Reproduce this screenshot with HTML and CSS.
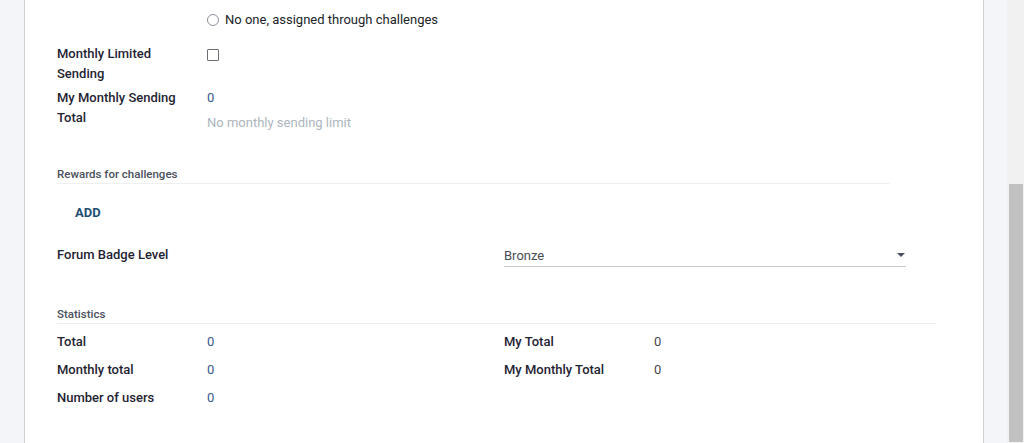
FILE: index.html
```html
<!DOCTYPE html>
<html>
<head>
  <title>Badge - Forum</title>
  <link rel="stylesheet" href="styles.css">
</head>
<body>
  <div class="page">
    <div class="gutter"></div>
    <main class="sheet">
      <!-- Granting options -->
      <div class="field-row first">
        <div class="label"></div>
        <div class="value">
          <label class="radio"><span class="radio-dot"></span>No one, assigned through challenges</label>
        </div>
      </div>
      <div class="field-row gap-top">
        <div class="label">Monthly Limited Sending</div>
        <div class="value"><span class="checkbox"></span></div>
      </div>
      <div class="field-row gap-small">
        <div class="label">My Monthly Sending Total</div>
        <div class="value">
          <div class="number">0</div>
          <div class="hint">No monthly sending limit</div>
        </div>
      </div>

      <!-- Rewards -->
      <div class="separator rewards">Rewards for challenges</div>
      <div class="add-line">ADD</div>
      <div class="field-row badge-row">
        <div class="label wide">Forum Badge Level</div>
        <div class="select">
          <span>Bronze</span>
          <span class="caret"></span>
        </div>
      </div>

      <!-- Statistics -->
      <div class="separator stats">Statistics</div>
      <div class="stats-grid">
        <div class="stats-col">
          <div class="field-row stat"><div class="label">Total</div><div class="number">0</div></div>
          <div class="field-row stat"><div class="label">Monthly total</div><div class="number">0</div></div>
          <div class="field-row stat"><div class="label">Number of users</div><div class="number">0</div></div>
        </div>
        <div class="stats-col mine">
          <div class="field-row stat"><div class="label">My Total</div><div class="number">0</div></div>
          <div class="field-row stat"><div class="label">My Monthly Total</div><div class="number">0</div></div>
        </div>
      </div>
    </main>
    <div class="gutter right"></div>
    <div class="scrollbar"><div class="thumb"></div></div>
  </div>
</body>
</html>
```

FILE: styles.css
```css
html, body {
  margin: 0;
  height: 100%;
  overflow: hidden;
}

body {
  font-family: Roboto, "Liberation Sans", sans-serif;
  font-size: 13px;
  line-height: 20px;
  color: #1f2433;
  background: #f4f5f8;
}

.page {
  display: flex;
  height: 443px;
}

.gutter {
  width: 24px;
  background: #f4f5f8;
}

.gutter.right {
  width: 23px;
}

.sheet {
  width: 879px;
  background: #fff;
  border-left: 1px solid #cfd0d4;
  border-right: 1px solid #cfd0d4;
  padding: 0 47px 0 32px;
}

.scrollbar {
  width: 17px;
  background: #f1f1f1;
  display: flex;
  justify-content: center;
}

.thumb {
  width: 14px;
  margin-top: 184px;
  height: 258px;
  background: #c1c1c1;
}

/* rows */
.field-row {
  display: flex;
}

.field-row.first {
  padding-top: 10px;
}

.gap-top {
  margin-top: 14px;
}

.gap-small {
  margin-top: 4px;
}

.label {
  width: 150px;
  padding-right: 16px;
  box-sizing: border-box;
  font-weight: 500;
  flex-shrink: 0;
}

.label.wide {
  width: 447px;
}

.value {
  display: flex;
  flex-direction: column;
}

.number {
  color: #34598c;
}

.mine .number {
  color: #45474d;
}

.hint {
  margin-top: 5px;
  color: #adb5bd;
}

.radio {
  display: flex;
  align-items: center;
  color: #212529;
}

.radio-dot {
  width: 10px;
  height: 10px;
  border: 1px solid #8a8f98;
  border-radius: 50%;
  margin-right: 6px;
}

.checkbox {
  display: block;
  width: 10px;
  height: 10px;
  border: 1px solid #6c6f76;
  border-radius: 1px;
  margin-top: 5px;
}

/* separators */
.separator {
  font-size: 11.5px;
  line-height: 17px;
  font-weight: 500;
  color: #4a505c;
  border-bottom: 1px solid #eeeff1;
}

.separator.rewards {
  margin-top: 33px;
  width: 833px;
}

.separator.stats {
  margin-top: 39px;
}

.add-line {
  margin-top: 19px;
  padding-left: 18px;
  font-weight: 700;
  color: #1e4f72;
}

.badge-row {
  margin-top: 22px;
}

.select {
  width: 402px;
  display: flex;
  justify-content: space-between;
  align-items: center;
  padding-top: 1px;
  border-bottom: 1px solid #c9cbd0;
  color: #4a4d55;
}

.caret {
  width: 0;
  height: 0;
  border-left: 4px solid transparent;
  border-right: 4px solid transparent;
  border-top: 4px solid #4a4d5e;
  margin-right: 1px;
  margin-bottom: 2px;
}

.stats-grid {
  display: flex;
  margin-top: 8px;
}

.stats-col {
  width: 447px;
  flex-shrink: 0;
}

.stats-col.mine {
  width: auto;
  flex: 1;
}

.stat {
  margin-bottom: 8px;
}
```
